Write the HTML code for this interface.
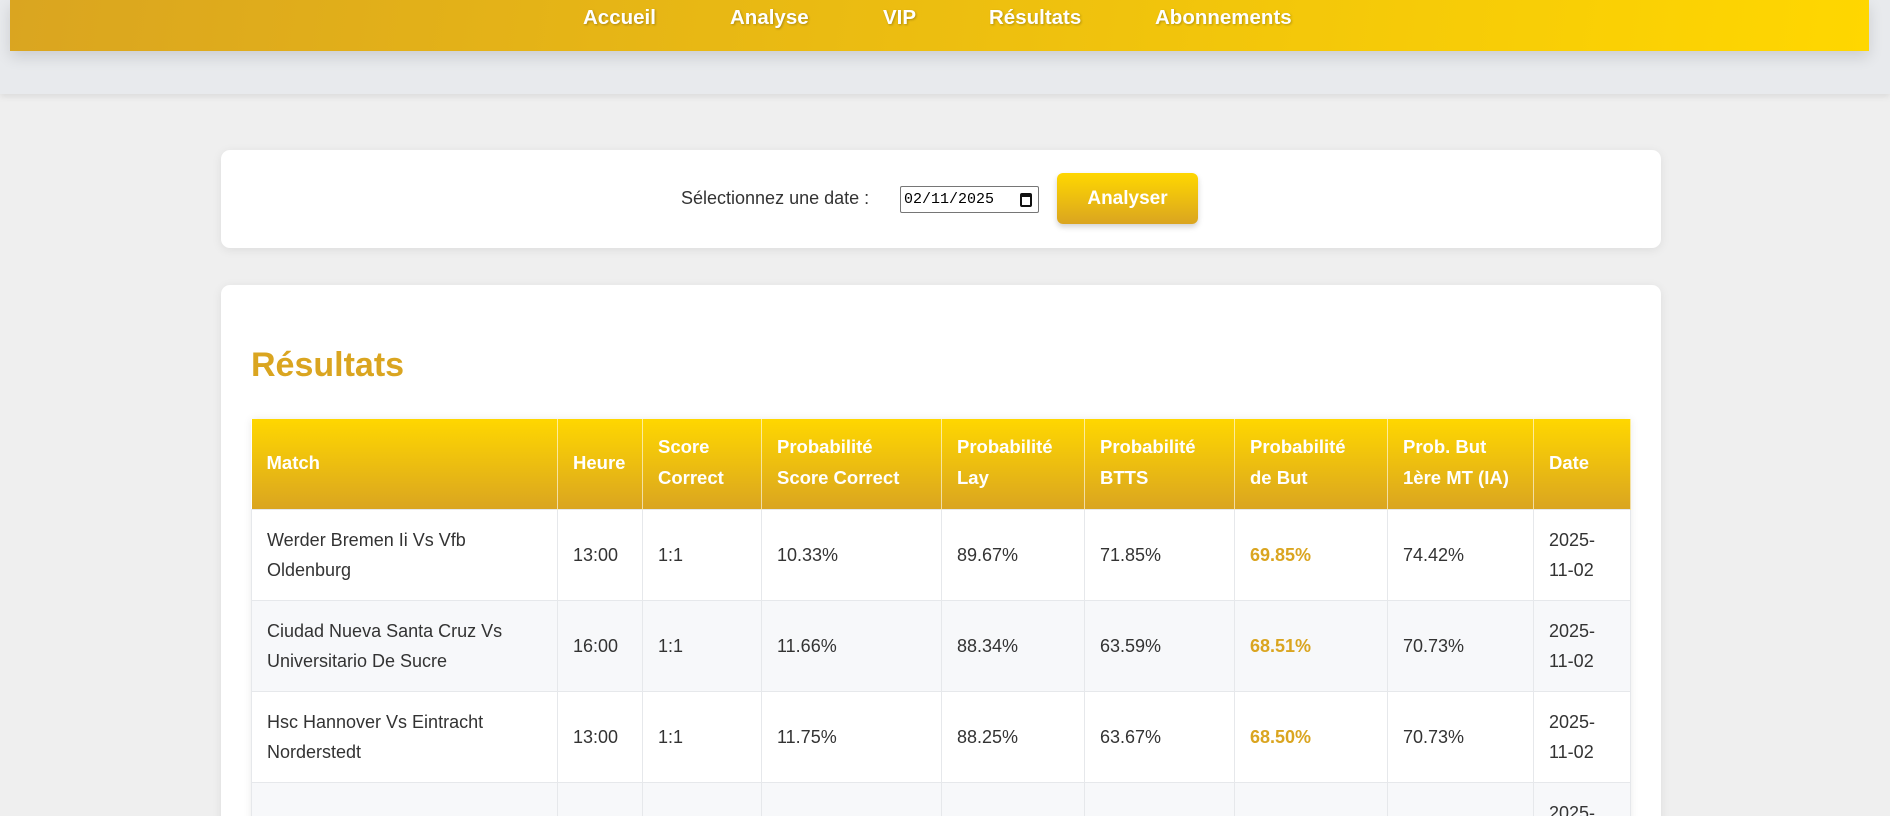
<!DOCTYPE html>
<html><head><meta charset="utf-8"><style>
*{box-sizing:border-box;margin:0;padding:0}
html,body{width:1890px;height:816px;overflow:hidden}
body{background:#efefef;font-family:"Liberation Sans",Arial,sans-serif;color:#333}
.wrap{position:relative;width:1890px;height:816px;overflow:hidden}
.hdr{position:absolute;left:0;top:0;width:1890px;height:94px;background:#e8eaed;box-shadow:0 3px 6px rgba(0,0,0,.08)}
.nav{position:absolute;left:10px;top:0;width:1859px;height:51px;background:linear-gradient(100deg,#DAA520,#FFD700);box-shadow:0 6px 14px rgba(0,0,0,.12)}
.nav span{position:absolute;top:6px;color:#fff;font-weight:bold;font-size:20.5px;text-shadow:1px 1px 2px rgba(0,0,0,.25)}
.card{position:absolute;left:221px;width:1440px;background:#fff;border-radius:9px;box-shadow:0 2px 10px rgba(0,0,0,.08)}
.lbl{position:absolute;left:681px;top:188px;font-size:18px;color:#333}
.date{position:absolute;left:900px;top:186px;width:139px;height:27px;border:1px solid #767676;border-radius:2px;font-family:"Liberation Mono",monospace;font-size:15px;line-height:25px;padding-left:3px;color:#000;background:#fff}
.date i{position:absolute;right:6px;top:6px;width:12px;height:14px;border:2px solid #111;border-top-width:4px;border-radius:2px}
.btn{position:absolute;left:1057px;top:173px;width:141px;height:51px;border-radius:6px;background:linear-gradient(180deg,#FFD700,#DAA520);color:#fff;font-weight:bold;font-size:19px;text-align:center;line-height:51px;box-shadow:0 3px 6px rgba(0,0,0,.18)}
h2{position:absolute;left:251px;top:346px;font-size:34px;color:#DAA520;font-weight:bold}
table{position:absolute;left:251px;top:419px;width:1379px;border-collapse:collapse;table-layout:fixed;box-shadow:0 0 8px rgba(0,0,0,.08)}
th{background:linear-gradient(180deg,#FFD700,#DAA520);color:#fff;font-size:18.5px;text-align:left;font-weight:bold;line-height:31px;padding:12px 15px 16px;height:90px;border-right:1px solid rgba(255,255,255,.6);vertical-align:middle}
td{font-size:18px;line-height:30px;padding:0 15px;height:91px;border:1px solid #e6e8eb;vertical-align:middle}
tr:nth-child(even) td{background:#f7f8fa}
td.g{color:#DAA520;font-weight:bold}
</style></head><body><div class="wrap">
<div class="hdr"></div>
<div class="nav">
<span style="left:573px">Accueil</span><span style="left:720px">Analyse</span><span style="left:873px">VIP</span><span style="left:979px">Résultats</span><span style="left:1145px">Abonnements</span>
</div>
<div class="card" style="top:150px;height:98px"></div>
<div class="lbl">Sélectionnez une date :</div>
<div class="date">02/11/2025<i></i></div>
<div class="btn">Analyser</div>
<div class="card" style="top:285px;height:600px"></div>
<h2>Résultats</h2>
<table>
<colgroup><col style="width:306px"><col style="width:85px"><col style="width:119px"><col style="width:180px"><col style="width:143px"><col style="width:150px"><col style="width:153px"><col style="width:146px"><col style="width:97px"></colgroup>
<thead><tr><th>Match</th><th>Heure</th><th>Score Correct</th><th>Probabilité Score Correct</th><th>Probabilité Lay</th><th>Probabilité BTTS</th><th>Probabilité de But</th><th>Prob. But 1ère MT (IA)</th><th>Date</th></tr></thead>
<tbody>
<tr><td>Werder Bremen Ii Vs Vfb Oldenburg</td><td>13:00</td><td>1:1</td><td>10.33%</td><td>89.67%</td><td>71.85%</td><td class="g">69.85%</td><td>74.42%</td><td>2025-11-02</td></tr>
<tr><td>Ciudad Nueva Santa Cruz Vs Universitario De Sucre</td><td>16:00</td><td>1:1</td><td>11.66%</td><td>88.34%</td><td>63.59%</td><td class="g">68.51%</td><td>70.73%</td><td>2025-11-02</td></tr>
<tr><td>Hsc Hannover Vs Eintracht Norderstedt</td><td>13:00</td><td>1:1</td><td>11.75%</td><td>88.25%</td><td>63.67%</td><td class="g">68.50%</td><td>70.73%</td><td>2025-11-02</td></tr>
<tr><td>&nbsp;<br>&nbsp;</td><td></td><td></td><td></td><td></td><td></td><td></td><td></td><td>2025-11-02</td></tr>
</tbody></table>
</div></body></html>
